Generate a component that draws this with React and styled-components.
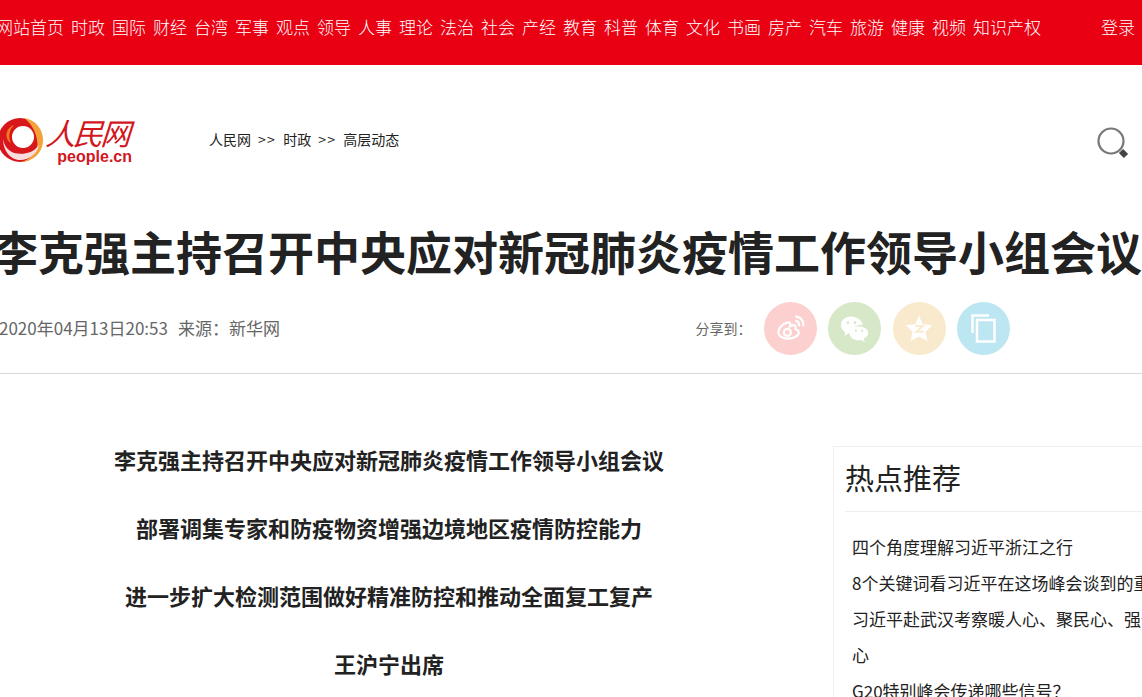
import React from "react";
import styled, { createGlobalStyle } from "styled-components";

const Global = createGlobalStyle`
  html, body { margin: 0; padding: 0; background: #fff; overflow: hidden; }
  body { font-family: "Liberation Sans", "Noto Sans CJK SC", sans-serif; }
  * { box-sizing: border-box; }
`;
const CJK = `"Noto Sans CJK SC", "Liberation Sans", sans-serif`;
const Page = styled.div`width: 1142px; height: 697px; overflow: hidden;`;
const TopBar = styled.header`
  height: 65px; background: #e90013; color: #fff; display: flex; align-items: flex-start;
  justify-content: space-between; padding: 15px 7px 0 0; font: 300 17px/24px ${CJK};
`;
const NavList = styled.nav`display: flex; gap: 7px; white-space: nowrap; margin-left: -4px;`;
const Crumbs = styled.div`display: flex; gap: 7px; font: 14px/18px ${CJK}; color: #222; margin: -2px 0 0 74px;`;
const CrumbSep = styled.span`letter-spacing: 1.300px;`;
const HeaderRow = styled.div`display: flex; align-items: center; height: 150px; padding: 0 11px 0 0;`;
const Logo = styled.div`display: flex; width: 135px; align-items: center; position: relative; height: 60px;`;
const LogoText = styled.div`display: flex; flex-direction: column; align-items: flex-end; width: 88px; flex: none; margin-top: -3px;`;
const LogoCn = styled.div`font: italic 400 30px/36px ${CJK}; color: #d2171e; letter-spacing: -2.500px; transform: skewX(-4deg); margin-right: 4px;`;
const LogoEn = styled.div`font: 700 16px/15px "Liberation Sans", sans-serif; color: #d2171e; margin-top: -1px;`;
const Spacer = styled.div`flex: 1;`;
const SearchBox = styled.div`margin-top: 8px; display: flex;`;
const Title = styled.h1`
  margin: 7px 0 0 -8px; font: 700 46px/56px ${CJK}; color: #222; white-space: nowrap; width: 1160px;
`;
const Meta = styled.div`
  display: flex; align-items: center; height: 54px; margin-top: 23px; font: 17px/22px ${CJK}; color: #666; white-space: nowrap;
`;
const DateLine = styled.span`margin-left: -1px; margin-right: 10px;`;
const ShareLabel = styled.span`font-size: 14px; margin-left: auto; margin-right: 12px;`;
const Icons = styled.div`display: flex; gap: 11.5px; margin-right: 132px;`;
const Circle = styled.div`
  width: 53px; height: 53px; border-radius: 50%; background: ${p => p.$bg}; display: flex; align-items: center; justify-content: center;
`;
const Rule = styled.hr`border: 0; border-top: 1px solid #d9d9d9; margin: 18px 0 0;`;
const Body = styled.div`display: flex; padding-top: 72px;`;
const Article = styled.article`width: 778px; flex: none; margin-top: -4px;`;
const Lead = styled.p`margin: 0 0 34px; text-align: center; font: 700 22px/34px ${CJK}; color: #222;`;
const Side = styled.aside`
  margin-left: 55px; flex: none; width: 320px; border: 1px solid #eee; border-right: 0; padding: 10px 0 0 12px;
`;
const SideTitle = styled.h2`
  margin: 0 0 0 -1px; font: 400 29px/41px ${CJK}; color: #222; border-bottom: 1px solid #eee; height: 55px;
`;
const HotList = styled.ul`margin: 0; padding: 17px 0 0 6px; list-style: none; width: 324px;`;
const HotItem = styled.li`font: 17px/36px ${CJK}; color: #222;`;

const nav = ["网站首页","时政","国际","财经","台湾","军事","观点","领导","人事","理论","法治","社会","产经","教育","科普","体育","文化","书画","房产","汽车","旅游","健康","视频","知识产权"];

const Swoosh = () => (
  <svg width="46" height="50" viewBox="0 0 46 50" style={{ marginLeft: -2, flex: "none" }}>
    <circle cx="22" cy="25" r="22" fill="#d8171c" />
    <path d="M26 3a22 22 0 0 1 19 22c0 12-9 21-21 22 12-5 17-12 15-22-1-8-6-17-13-22z" fill="#f4a13a" />
    <circle cx="25" cy="22" r="11" fill="#fff" />
    <path d="M5 24c2 12 12 17 24 14 5-1 9-4 12-8-2 9-10 15-19 15C12 45 5 35 5 24z" fill="#fff" opacity=".85" />
    <path d="M16 10c-5 5-6 12-3 18-6-3-7-14 3-18z" fill="#f0781e" />
  </svg>
);
const Search = () => (
  <svg width="34" height="34" viewBox="0 0 34 34">
    <circle cx="14" cy="14" r="12.500" fill="none" stroke="#777" strokeWidth="2.200" />
    <path d="M24 24l5 5" stroke="#444" strokeWidth="6" />
  </svg>
);
const Weibo = () => (
  <svg width="30" height="30" viewBox="0 0 34 34" fill="none" stroke="#fff">
    <path d="M14 11c-6 1-11 7-10 12 1 4 6 6 11 6 6 0 12-3 12-7 0-3-3-3-4-4 1-3 0-5-3-4l-3 1c1-3 0-5-3-4z" strokeWidth="2.500" />
    <circle cx="14" cy="22" r="4" strokeWidth="2.500" />
    <path d="M23 9c3 0 5 2 4 6M23 4c6 0 10 5 9 11" strokeWidth="2.500" />
  </svg>
);
const Wechat = () => (
  <svg width="30" height="30" viewBox="0 0 34 34" fill="#fff">
    <path d="M13 4C6 4 1 8 1 14c0 3 2 6 5 8l-1 4 5-3c1 .3 2 .4 3 .4-.4-6 5-11 13-10-1-5-7-9.400-13-9.400z" />
    <path d="M21 15c-6 0-10 3.500-10 8s4 8 10 8c1 0 2 0 3-.4l4 2.400-1-4c3-1.500 5-3.500 5-6 0-4.500-5-8-11-8z" />
    <circle cx="9" cy="11" r="1.600" fill="#d7e8c8" /><circle cx="17" cy="11" r="1.600" fill="#d7e8c8" />
    <circle cx="18" cy="20" r="1.300" fill="#d7e8c8" /><circle cx="25" cy="20" r="1.300" fill="#d7e8c8" />
  </svg>
);
const QZone = () => (
  <svg width="28" height="28" viewBox="0 0 30 30">
    <path d="M15 2l4 9 10 1-7 7 2 10-9-5-9 5 2-10-7-7 10-1z" fill="#fff" />
    <path d="M11 13h8l-7 6h8" fill="none" stroke="#f9e9cd" strokeWidth="2" />
  </svg>
);
const Copy = () => (
  <svg width="25" height="29" viewBox="0 0 25 29" fill="none" stroke="#fff" strokeWidth="2.500">
    <rect x="6" y="6" width="17.500" height="21.500" />
    <path d="M1.500 19V1.500H18" />
  </svg>
);

export default function App() {
  return (
    <Page>
      <Global />
      <TopBar>
        <NavList>{nav.map(n => <span key={n}>{n}</span>)}</NavList>
        <span>登录</span>
      </TopBar>
      <HeaderRow>
        <Logo>
          <Swoosh />
          <LogoText>
            <LogoCn>人民网</LogoCn>
            <LogoEn>people.cn</LogoEn>
          </LogoText>
        </Logo>
        <Crumbs><span>人民网</span><CrumbSep>&gt;&gt;</CrumbSep><span>时政</span><CrumbSep>&gt;&gt;</CrumbSep><span>高层动态</span></Crumbs>
        <Spacer />
        <SearchBox><Search /></SearchBox>
      </HeaderRow>
      <Title>李克强主持召开中央应对新冠肺炎疫情工作领导小组会议</Title>
      <Meta>
        <DateLine>2020年04月13日20:53</DateLine>
        <span>来源：新华网</span>
        <ShareLabel>分享到：</ShareLabel>
        <Icons>
          <Circle $bg="#fdd0d0"><Weibo /></Circle>
          <Circle $bg="#d7e8c8"><Wechat /></Circle>
          <Circle $bg="#f9e9cd"><QZone /></Circle>
          <Circle $bg="#bce6f1"><Copy /></Circle>
        </Icons>
      </Meta>
      <Rule />
      <Body>
        <Article>
          <Lead>李克强主持召开中央应对新冠肺炎疫情工作领导小组会议</Lead>
          <Lead>部署调集专家和防疫物资增强边境地区疫情防控能力</Lead>
          <Lead>进一步扩大检测范围做好精准防控和推动全面复工复产</Lead>
          <Lead>王沪宁出席</Lead>
        </Article>
        <Side>
          <SideTitle>热点推荐</SideTitle>
          <HotList>
            <HotItem>四个角度理解习近平浙江之行</HotItem>
            <HotItem>8个关键词看习近平在这场峰会谈到的重点</HotItem>
            <HotItem>习近平赴武汉考察暖人心、聚民心、强信心</HotItem>
            <HotItem>G20特别峰会传递哪些信号？</HotItem>
          </HotList>
        </Side>
      </Body>
    </Page>
  );
}
